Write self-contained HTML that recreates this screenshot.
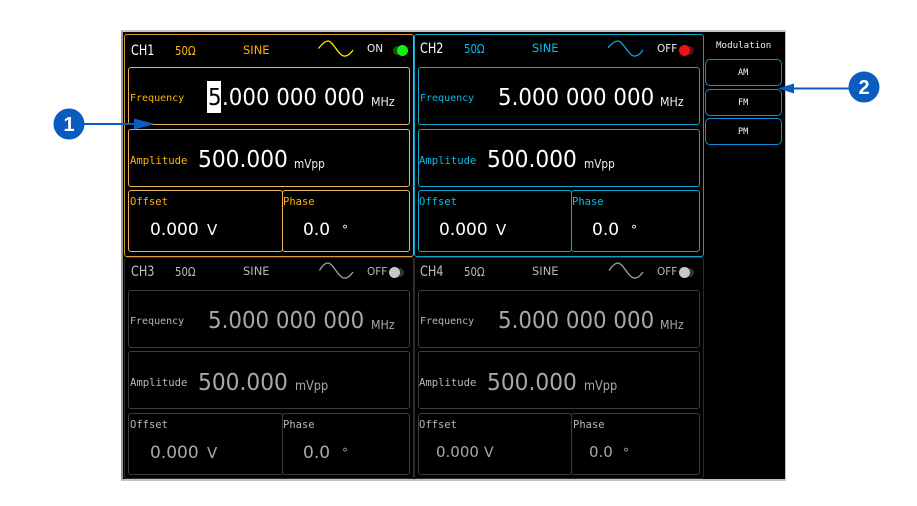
<!DOCTYPE html>
<html><head><meta charset="utf-8">
<style>
html,body{margin:0;padding:0;background:#fff;width:917px;height:506px;overflow:hidden}
body{position:relative;font-family:"DejaVu Sans",sans-serif}
div,svg{position:absolute;box-sizing:border-box}
.t{white-space:nowrap;line-height:1;transform-origin:0 0}
.m{font-family:"DejaVu Sans Mono",monospace;margin-top:2px}
.b{border-radius:3px;border:1.5px solid}
.p{border-radius:3px;border:1.5px solid}
.or .p{border-color:#d99a2b}.or .b{border-color:#e8b45a}.or .c{color:#ffb400}
.bl .p{border-color:#0f9ec4}.bl .b{border-color:#0ea5d0}.bl .c{color:#00bfe8}
.gr .p{border-color:#2c2c2c}.gr .b{border-color:#3c3c3c}.gr .c{color:#b8b8b8}
.or .v,.bl .v,.or .n,.bl .n{color:#fff}
.gr .v,.gr .n{color:#a8a8a8}
.gr .h{color:#c0c0c0}
.or .h,.bl .h{color:#fff}
.grp{left:0;top:0;width:917px;height:506px}
.big{transform:scaleX(.928);margin-top:2px}
.amp{transform:scaleX(.945);margin-top:2px}
.mz{transform:scaleX(.92);margin-top:1px}
.vp{transform:scaleX(.84);margin-top:2px}
.ch{transform:scaleX(.8);margin-top:1px;font-size:14px!important}
.oh{transform:scaleX(.81);margin-top:1px;font-size:12.500px!important}
.si{margin-top:1px}
.sv{margin-top:1px}
.dg{font-size:12px!important;margin-top:3px}
</style></head><body>
<div style="left:121px;top:30px;width:665px;height:451px;background:#000;border:1px solid #aaa;border-width:2px 1px 2px 2px;border-color:#c4c4c4 #c4c4c4 #c4c4c4 #9a9a9a"></div>

<!-- CH1 -->
<div class="grp or">
<div class="p" style="left:124px;top:34px;width:290px;height:222.5px"></div>
<div class="t h ch" style="left:131px;top:43px;font-size:13px">CH1</div>
<div class="t c oh" style="left:175px;top:44px;font-size:11.5px">50Ω</div>
<div class="t c si" style="left:243px;top:44px;font-size:11.5px">SINE</div>
<svg style="left:317px;top:38px" width="38" height="22" viewBox="0 0 38 22"><path d="M1.5 10.500C5 6 8 3 11 3C16 3 21 17 27 18C31 18.500 34 15 36 12" fill="none" stroke="#ffe600" stroke-width="1.3"/></svg>
<div class="t h sv" style="left:367px;top:43px;font-size:10.500px;color:#eee">ON</div>
<div style="left:393px;top:46px;width:9px;height:9px;border-radius:50%;background:#0b5a0b"></div>
<div style="left:397px;top:45px;width:11px;height:11px;border-radius:50%;background:#12ee12"></div>
<div class="b" style="left:128px;top:67px;width:282px;height:58px"></div>
<div class="t m c" style="left:130px;top:92px;font-size:10px">Frequency</div>
<div style="left:207px;top:81px;width:14px;height:32px;background:#fff"></div>
<div class="t big" style="left:208px;top:85px;font-size:23px;color:#000">5</div>
<div class="t v big" style="left:221.500px;top:85px;font-size:23px">.000 000 000</div>
<div class="t n mz" style="left:371px;top:95px;font-size:12px;color:#eee">MHz</div>
<div class="b" style="left:128px;top:129px;width:282px;height:58px"></div>
<div class="t m c" style="left:130px;top:154px;font-size:10.600px">Amplitude</div>
<div class="t v amp" style="left:198px;top:147px;font-size:23px">500.000</div>
<div class="t n vp" style="left:294px;top:156px;font-size:12.500px;color:#eee">mVpp</div>
<div class="b" style="left:128px;top:190px;width:154.500px;height:62px"></div>
<div class="b" style="left:281.500px;top:190px;width:128.500px;height:62px"></div>
<div class="t m c" style="left:130px;top:195px;font-size:10.500px">Offset</div>
<div class="t m c" style="left:283px;top:195px;font-size:10.500px">Phase</div>
<div class="t v sv" style="left:150px;top:221px;font-size:17px">0.000</div>
<div class="t v sv" style="left:207px;top:222px;font-size:15px">V</div>
<div class="t v sv" style="left:303px;top:221px;font-size:17px">0.0</div>
<div class="t v dg" style="left:342px;top:221px;font-size:15px">°</div>
</div>

<!-- CH2 -->
<div class="grp bl">
<div class="p" style="left:414px;top:34px;width:290px;height:222.5px"></div>
<div class="t h ch" style="left:420px;top:41px;font-size:13px">CH2</div>
<div class="t c oh" style="left:464px;top:42px;font-size:11.5px">50Ω</div>
<div class="t c si" style="left:532px;top:42px;font-size:11.5px">SINE</div>
<svg style="left:607px;top:38px" width="38" height="22" viewBox="0 0 38 22"><path d="M1 10C4 6 8 3 11 3C16 3 21 17 27 18C31 18.500 34 15 36 12" fill="none" stroke="#0aa6e0" stroke-width="1.3"/></svg>
<div class="t h sv" style="left:657px;top:43px;font-size:10.500px;color:#eee">OFF</div>
<div style="left:685px;top:46px;width:9px;height:9px;border-radius:50%;background:#5a0b0b"></div>
<div style="left:679px;top:45px;width:11px;height:11px;border-radius:50%;background:#ee1212"></div>
<div class="b" style="left:418px;top:67px;width:282px;height:58px"></div>
<div class="t m c" style="left:420px;top:92px;font-size:10px">Frequency</div>
<div class="t v big" style="left:498px;top:85px;font-size:23px">5.000 000 000</div>
<div class="t n mz" style="left:660px;top:95px;font-size:12px;color:#eee">MHz</div>
<div class="b" style="left:418px;top:129px;width:282px;height:58px"></div>
<div class="t m c" style="left:419px;top:154px;font-size:10.600px">Amplitude</div>
<div class="t v amp" style="left:487px;top:147px;font-size:23px">500.000</div>
<div class="t n vp" style="left:584px;top:156px;font-size:12.500px;color:#eee">mVpp</div>
<div class="b" style="left:418px;top:190px;width:153.500px;height:62px"></div>
<div class="b" style="left:570.500px;top:190px;width:129.500px;height:62px"></div>
<div class="t m c" style="left:419px;top:195px;font-size:10.500px">Offset</div>
<div class="t m c" style="left:572px;top:195px;font-size:10.500px">Phase</div>
<div class="t v sv" style="left:439px;top:221px;font-size:17px">0.000</div>
<div class="t v sv" style="left:496px;top:222px;font-size:15px">V</div>
<div class="t v sv" style="left:592px;top:221px;font-size:17px">0.0</div>
<div class="t v dg" style="left:631px;top:221px;font-size:15px">°</div>
</div>

<!-- CH3 -->
<div class="grp gr">
<div class="p" style="left:124px;top:257px;width:290px;height:222px"></div>
<div class="t h ch" style="left:131px;top:264px;font-size:13px">CH3</div>
<div class="t c oh" style="left:175px;top:265px;font-size:11.5px">50Ω</div>
<div class="t c si" style="left:243px;top:265px;font-size:11.5px">SINE</div>
<svg style="left:317px;top:260px" width="38" height="22" viewBox="0 0 38 22"><path d="M2.500 10.500C5 6 8 3 11 3C16 3 21 17 27 18C31 18.500 34 15 36 12" fill="none" stroke="#a0a0a0" stroke-width="1.3"/></svg>
<div class="t c sv" style="left:367px;top:266px;font-size:10.500px">OFF</div>
<div style="left:395px;top:268px;width:9px;height:9px;border-radius:50%;background:#333"></div>
<div style="left:389px;top:267px;width:11px;height:11px;border-radius:50%;background:#c8c8c8"></div>
<div class="b" style="left:128px;top:290px;width:282px;height:58px"></div>
<div class="t m c" style="left:130px;top:315px;font-size:10px">Frequency</div>
<div class="t v big" style="left:208px;top:308px;font-size:23px">5.000 000 000</div>
<div class="t n mz" style="left:371px;top:318px;font-size:12px">MHz</div>
<div class="b" style="left:128px;top:351px;width:282px;height:58px"></div>
<div class="t m c" style="left:130px;top:376px;font-size:10.600px">Amplitude</div>
<div class="t v amp" style="left:198px;top:370px;font-size:23px">500.000</div>
<div class="t n vp" style="left:295px;top:378px;font-size:13.500px">mVpp</div>
<div class="b" style="left:128px;top:413px;width:154.500px;height:62px"></div>
<div class="b" style="left:281.500px;top:413px;width:128.500px;height:62px"></div>
<div class="t m c" style="left:130px;top:418px;font-size:10.500px">Offset</div>
<div class="t m c" style="left:283px;top:418px;font-size:10.500px">Phase</div>
<div class="t v sv" style="left:150px;top:444px;font-size:17px">0.000</div>
<div class="t v sv" style="left:207px;top:445px;font-size:15px">V</div>
<div class="t v sv" style="left:303px;top:444px;font-size:17px">0.0</div>
<div class="t v dg" style="left:342px;top:444px;font-size:15px">°</div>
</div>

<!-- CH4 -->
<div class="grp gr">
<div class="p" style="left:414px;top:257px;width:290px;height:222px"></div>
<div class="t h ch" style="left:420px;top:264px;font-size:13px">CH4</div>
<div class="t c oh" style="left:464px;top:265px;font-size:11.5px">50Ω</div>
<div class="t c si" style="left:532px;top:265px;font-size:11.5px">SINE</div>
<svg style="left:607px;top:260px" width="38" height="22" viewBox="0 0 38 22"><path d="M2 10.500C5 6 8 3 11 3C16 3 21 17 27 18C31 18.500 34 15 36 12" fill="none" stroke="#a0a0a0" stroke-width="1.3"/></svg>
<div class="t c sv" style="left:657px;top:266px;font-size:10.500px">OFF</div>
<div style="left:685px;top:268px;width:9px;height:9px;border-radius:50%;background:#333"></div>
<div style="left:679px;top:267px;width:11px;height:11px;border-radius:50%;background:#c8c8c8"></div>
<div class="b" style="left:418px;top:290px;width:282px;height:58px"></div>
<div class="t m c" style="left:420px;top:315px;font-size:10px">Frequency</div>
<div class="t v big" style="left:498px;top:308px;font-size:23px">5.000 000 000</div>
<div class="t n mz" style="left:660px;top:318px;font-size:12px">MHz</div>
<div class="b" style="left:418px;top:351px;width:282px;height:58px"></div>
<div class="t m c" style="left:419px;top:376px;font-size:10.600px">Amplitude</div>
<div class="t v amp" style="left:487px;top:370px;font-size:23px">500.000</div>
<div class="t n vp" style="left:584px;top:378px;font-size:13.500px">mVpp</div>
<div class="b" style="left:418px;top:413px;width:153.500px;height:62px"></div>
<div class="b" style="left:570.500px;top:413px;width:129.500px;height:62px"></div>
<div class="t m c" style="left:419px;top:418px;font-size:10.500px">Offset</div>
<div class="t m c" style="left:573px;top:418px;font-size:10.500px">Phase</div>
<div class="t v sv" style="left:436px;top:444px;font-size:15px">0.000</div>
<div class="t v sv" style="left:484px;top:445px;font-size:14px">V</div>
<div class="t v sv" style="left:589px;top:444px;font-size:15px">0.0</div>
<div class="t v dg" style="left:623px;top:444px;font-size:14px">°</div>
</div>

<!-- Modulation -->
<div class="t m" style="left:716px;top:40px;font-size:9.200px;color:#eee;margin-top:1px">Modulation</div>
<div style="left:705px;top:59px;width:77px;height:27px;border:1.800px solid #0a8fd8;border-radius:5px"></div>
<div style="left:705px;top:89px;width:77px;height:27px;border:1.800px solid #0a8fd8;border-radius:5px"></div>
<div style="left:705px;top:118px;width:77px;height:27px;border:1.800px solid #0a8fd8;border-radius:5px"></div>
<div class="t m" style="left:738px;top:67px;font-size:8.500px;color:#fff">AM</div>
<div class="t m" style="left:738px;top:97px;font-size:8.500px;color:#fff">FM</div>
<div class="t m" style="left:738px;top:126px;font-size:8.500px;color:#fff">PM</div>

<!-- Callouts -->
<svg style="left:0;top:0" width="917" height="506" viewBox="0 0 917 506">
<path d="M84 124H134" stroke="#0a5cc0" stroke-width="2" fill="none"/>
<path d="M134 118.500L155 124L134 129.500Z" fill="#0a5cc0"/>
<circle cx="69" cy="124" r="15.500" fill="#0a5cc0"/>
<path d="M778 88.500L794 83.500V93.500Z" fill="#0a5cc0"/>
<path d="M792 88.500H850" stroke="#0a5cc0" stroke-width="2" fill="none"/>
<circle cx="864" cy="87" r="15.500" fill="#0a5cc0"/>
<text x="69" y="131" text-anchor="middle" font-family="Liberation Sans" font-weight="700" font-size="20" fill="#fff">1</text>
<text x="864" y="94" text-anchor="middle" font-family="Liberation Sans" font-weight="700" font-size="20" fill="#fff">2</text>
</svg>
</body></html>
